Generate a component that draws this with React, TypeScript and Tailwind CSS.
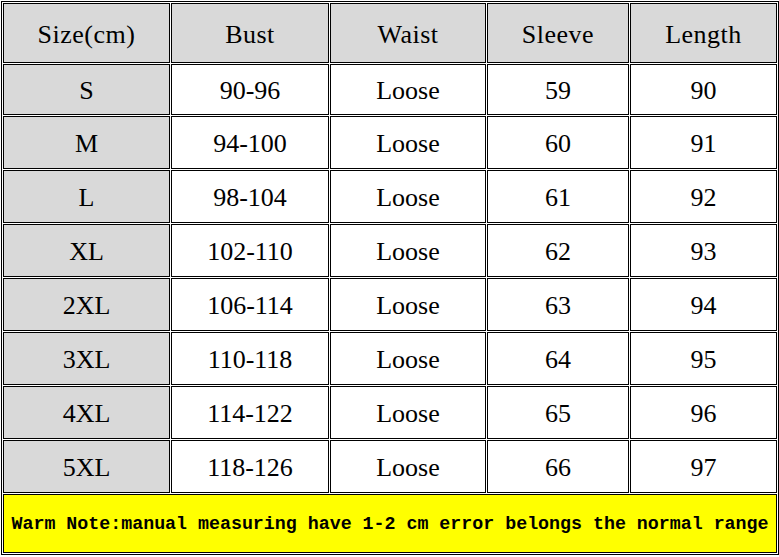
const headers = ["Size(cm)", "Bust", "Waist", "Sleeve", "Length"];

const rows = [
  ["S", "90-96", "Loose", "59", "90"],
  ["M", "94-100", "Loose", "60", "91"],
  ["L", "98-104", "Loose", "61", "92"],
  ["XL", "102-110", "Loose", "62", "93"],
  ["2XL", "106-114", "Loose", "63", "94"],
  ["3XL", "110-118", "Loose", "64", "95"],
  ["4XL", "114-122", "Loose", "65", "96"],
  ["5XL", "118-126", "Loose", "66", "97"],
];

const cell =
  "flex items-center justify-center border border-black pt-[3px] font-['Liberation_Serif',serif] text-[26px] leading-none text-black";

export default function App() {
  return (
    <div className="h-[557px] w-[779px] bg-white pl-px pt-px">
      <div className="grid w-[778px] grid-cols-[167px_158px_156px_142px_147px] gap-px border border-black p-px">
        {headers.map((h) => (
          <div key={h} className={`${cell} h-[60px] bg-[#d9d9d9] tracking-[0.5px]`}>
            {h}
          </div>
        ))}
        {rows.map((row, i) =>
          row.map((v, j) => (
            <div
              key={`${i}-${j}`}
              className={`${cell} ${i === 0 ? "h-[51px]" : "h-[53px]"} ${j === 0 ? "bg-[#d9d9d9]" : "bg-white"}`}
            >
              {v}
            </div>
          ))
        )}
        <div className="col-span-5 flex h-[59px] items-center justify-center whitespace-nowrap border border-black bg-[#ffff00] pt-[2px] font-['Liberation_Mono',monospace] text-[18.3px] font-bold text-black">
          Warm Note:manual measuring have 1-2 cm error belongs the normal range
        </div>
      </div>
    </div>
  );
}
